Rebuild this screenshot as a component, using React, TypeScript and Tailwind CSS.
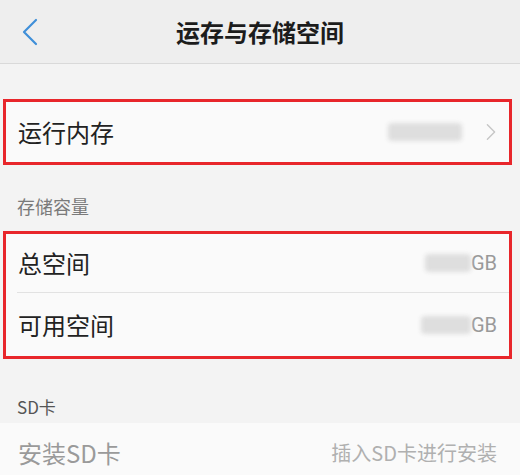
// Storage settings screen: memory + storage rows, highlighted in red boxes.

const cjk = { fontFamily: '"Noto Sans CJK SC", "Noto Sans", sans-serif' };

function Chevron({ className }: { className: string }) {
  return (
    <svg viewBox="0 0 12 20" className={className} fill="none" stroke="currentColor" strokeLinecap="round" strokeLinejoin="round">
      <path d="M2 2l8 8-8 8" />
    </svg>
  );
}

function Blur({ w }: { w: string }) {
  return <div className={`${w} h-[18px] rounded-sm bg-[#dedede] blur-[2px]`} />;
}

export default function App() {
  return (
    <div className="w-[520px] h-[475px] overflow-hidden bg-[#f3f3f3]" style={cjk}>
      {/* Header */}
      <div className="relative h-[64px] flex items-center justify-center bg-[#eeeeee] border-b border-[#d9d9d9]">
        <svg viewBox="0 0 16 28" className="absolute left-[22px] top-[18px] w-[16px] h-[28px] text-[#3f8fd8]" fill="none" stroke="currentColor" strokeWidth="2.2" strokeLinecap="round" strokeLinejoin="round">
          <path d="M14 2L2 14l12 12" />
        </svg>
        <span className="text-[24px] font-bold text-[#1c1c1c]">运存与存储空间</span>
      </div>

      <div className="h-[35px]" />

      {/* RAM */}
      <div className="ml-[3px] mr-[8px] border-[3px] border-[#e8262b] bg-[#fafafa]">
        <div className="h-[60px] flex items-center pl-[12px] pr-[12px]">
          <span className="flex-1 text-[24px] text-[#222]">运行内存</span>
          <Blur w="w-[74px]" />
          <Chevron className="ml-[23px] w-[12px] h-[18px] text-[#c6c6c6] stroke-[1.6]" />
        </div>
      </div>

      <div className="h-[66px] flex items-end pl-[17px] pb-[11px]">
        <span className="text-[18px] text-[#7a7a7a]">存储容量</span>
      </div>

      {/* Storage */}
      <div className="ml-[3px] mr-[8px] border-[3px] border-[#e8262b] bg-[#fafafa]">
        <div className="h-[58px] flex items-center pl-[12px] pr-[12px]">
          <span className="flex-1 text-[24px] text-[#222]">总空间</span>
          <Blur w="w-[46px]" />
          <span className="text-[20px] text-[#999]" style={{ fontFamily: 'Roboto, sans-serif' }}>GB</span>
        </div>
        <div className="ml-[11px] h-px bg-[#e2e2e2]" />
        <div className="h-[63px] flex items-center pl-[12px] pr-[12px]">
          <span className="flex-1 text-[24px] text-[#222]">可用空间</span>
          <Blur w="w-[50px]" />
          <span className="text-[20px] text-[#999]" style={{ fontFamily: 'Roboto, sans-serif' }}>GB</span>
        </div>
      </div>

      <div className="h-[64px] flex items-end pl-[17px] pb-[4px]">
        <span className="text-[17px] text-[#555]">SD卡</span>
      </div>

      {/* SD card */}
      <div className="h-[60px] flex items-center pl-[18px] pr-[23px] bg-[#fafafa]">
        <span className="flex-1 text-[24px] text-[#9a9a9a]">安装SD卡</span>
        <span className="text-[20px] text-[#b0b0b0]">插入SD卡进行安装</span>
      </div>
    </div>
  );
}
